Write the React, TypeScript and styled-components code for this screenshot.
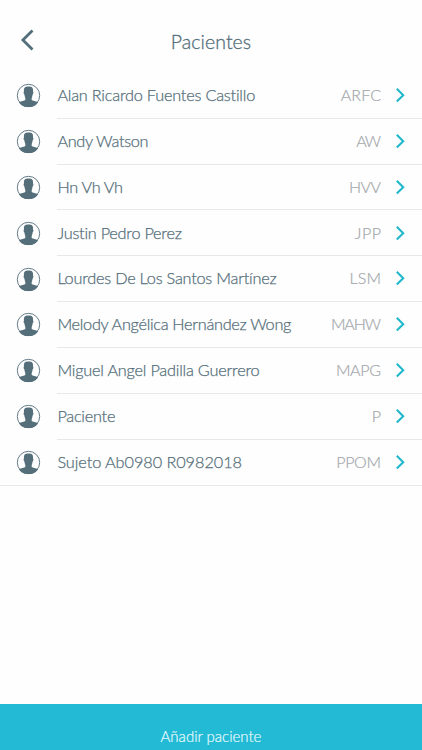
import React from 'react';
import styled, { createGlobalStyle } from 'styled-components';

const GlobalStyle = createGlobalStyle`
  * { box-sizing: border-box; }
  body { margin: 0; background: #fefefe; }
`;

const Screen = styled.main`
  display: flex;
  flex-direction: column;
  width: 100%;
  height: 100vh;
  min-height: 750px;
  overflow: hidden;
  background: #fefefe;
  color: #546e7a;
  font-family: Lato, sans-serif;
  font-weight: 300;
  font-variant-ligatures: none;
`;

const Header = styled.header`
  display: grid;
  grid-template-columns: 56px 1fr 56px;
  height: 72.9px;
  flex: none;
`;

const BackButton = styled.button`
  display: flex;
  align-items: flex-start;
  padding: 28px 0 0 19px;
  border: 0;
  background: none;
  color: inherit;
`;

const Title = styled.h1`
  margin: 0;
  padding-top: 30px;
  font-size: 19.5px;
  line-height: 24px;
  font-weight: 300;
  text-align: center;
  letter-spacing: 0.08px;
  -webkit-text-stroke: 0.3px currentColor;
`;

const List = styled.ul`
  margin: 0;
  padding: 0;
  list-style: none;
  border-bottom: 1px solid #e6e8e9;
`;

const Row = styled.li`
  display: flex;
  height: 45.83px;
  padding-left: 16px;
`;

const Avatar = styled.svg`
  flex: none;
  width: 25px;
  height: 25px;
  margin: 10.4px 16px 0 0;
`;

const RowBody = styled.div`
  display: flex;
  flex: 1;
  align-items: center;
  padding: 0 16px 0.5px 0;
  border-bottom: 1px solid #e6e8e9;

  ${Row}:last-child & { border-bottom-color: transparent; }
`;

const Name = styled.span<{ $tracking: number }>`
  flex: 1;
  padding-left: 0.4px;
  font-size: 16.3px;
  line-height: 20px;
  white-space: nowrap;
  letter-spacing: ${p => p.$tracking - 0.14}px;
  -webkit-text-stroke: 0.25px currentColor;
`;

const Initials = styled.span<{ $tracking: number }>`
  margin-right: ${p => 15 - p.$tracking}px;
  color: #a3a7ab;
  font-size: 16px;
  line-height: 20px;
  letter-spacing: ${p => p.$tracking}px;
  -webkit-text-stroke: 0.2px currentColor;
`;

const AddButton = styled.button`
  flex: none;
  height: 46px;
  margin-top: auto;
  padding: 18px 0 0;
  border: 0;
  background: #22bad4;
  color: #e9fbff;
  font: 300 15px/20px Lato, sans-serif;
  letter-spacing: 0;
  text-align: center;
  -webkit-text-stroke: 0.2px currentColor;
`;

interface Patient {
  name: string;
  initials: string;
  nameTracking: number;
  initialsTracking: number;
}

const patients: Patient[] = [
  { name: 'Alan Ricardo Fuentes Castillo', initials: 'ARFC', nameTracking: -0.07, initialsTracking: 0.1 },
  { name: 'Andy Watson', initials: 'AW', nameTracking: -0.2, initialsTracking: -1.4 },
  { name: 'Hn Vh Vh', initials: 'HVV', nameTracking: -0.18, initialsTracking: -0.5 },
  { name: 'Justin Pedro Perez', initials: 'JPP', nameTracking: -0.1, initialsTracking: 0.6 },
  { name: 'Lourdes De Los Santos Martínez', initials: 'LSM', nameTracking: -0.09, initialsTracking: 0.2 },
  { name: 'Melody Angélica Hernández Wong', initials: 'MAHW', nameTracking: -0.16, initialsTracking: -1.1 },
  { name: 'Miguel Angel Padilla Guerrero', initials: 'MAPG', nameTracking: -0.07, initialsTracking: -0.3 },
  { name: 'Paciente', initials: 'P', nameTracking: -0.1, initialsTracking: 0 },
  { name: 'Sujeto Ab0980 R0982018', initials: 'PPOM', nameTracking: 0.08, initialsTracking: -0.3 },
];

function PersonIcon() {
  return (
    <Avatar viewBox="0 0 25 25" aria-hidden="true">
      <circle cx="12.5" cy="12.5" r="11.2" fill="none" stroke="#546e7a" strokeWidth="0.9" />
      <path
        fill="#546e7a"
        d="M8 8.4C7.6 4.8 9 3.5 12.5 3.5s4.9 1.3 4.5 4.9c.7.3.4 2.5-.3 2.9-.2 1.6-.6 2.7-1 3.6v2.1c.8.8 4.2 1 6.4 2.4A11.6 11.6 0 0 1 12.5 24.1 11.6 11.6 0 0 1 2.9 19.4c2.2-1.4 5.6-1.6 6.4-2.4v-2.1c-.4-.9-.8-2-1-3.6-.7-.4-1-2.6-.3-2.9Z"
      />
    </Avatar>
  );
}

function ForwardIcon() {
  return (
    <svg width="10" height="16" viewBox="0 0 10 16" fill="none" aria-hidden="true">
      <path d="m.8 1.8 6.4 6.4-6.4 6.4" stroke="#22b8cc" strokeWidth="2.1" />
    </svg>
  );
}

export default function App() {
  return (
    <>
      <GlobalStyle />
      <Screen>
        <Header>
          <BackButton aria-label="Volver">
            <svg width="16" height="24" viewBox="0 0 16 24" fill="none">
              <path d="M13.5 2.4 3.9 12l9.6 9.6" stroke="#546e7a" strokeWidth="2.8" />
            </svg>
          </BackButton>
          <Title>Pacientes</Title>
        </Header>
        <List>
          {patients.map(p => (
            <Row key={p.initials}>
              <PersonIcon />
              <RowBody>
                <Name $tracking={p.nameTracking}>{p.name}</Name>
                <Initials $tracking={p.initialsTracking}>{p.initials}</Initials>
                <ForwardIcon />
              </RowBody>
            </Row>
          ))}
        </List>
        <AddButton>Añadir paciente</AddButton>
      </Screen>
    </>
  );
}
